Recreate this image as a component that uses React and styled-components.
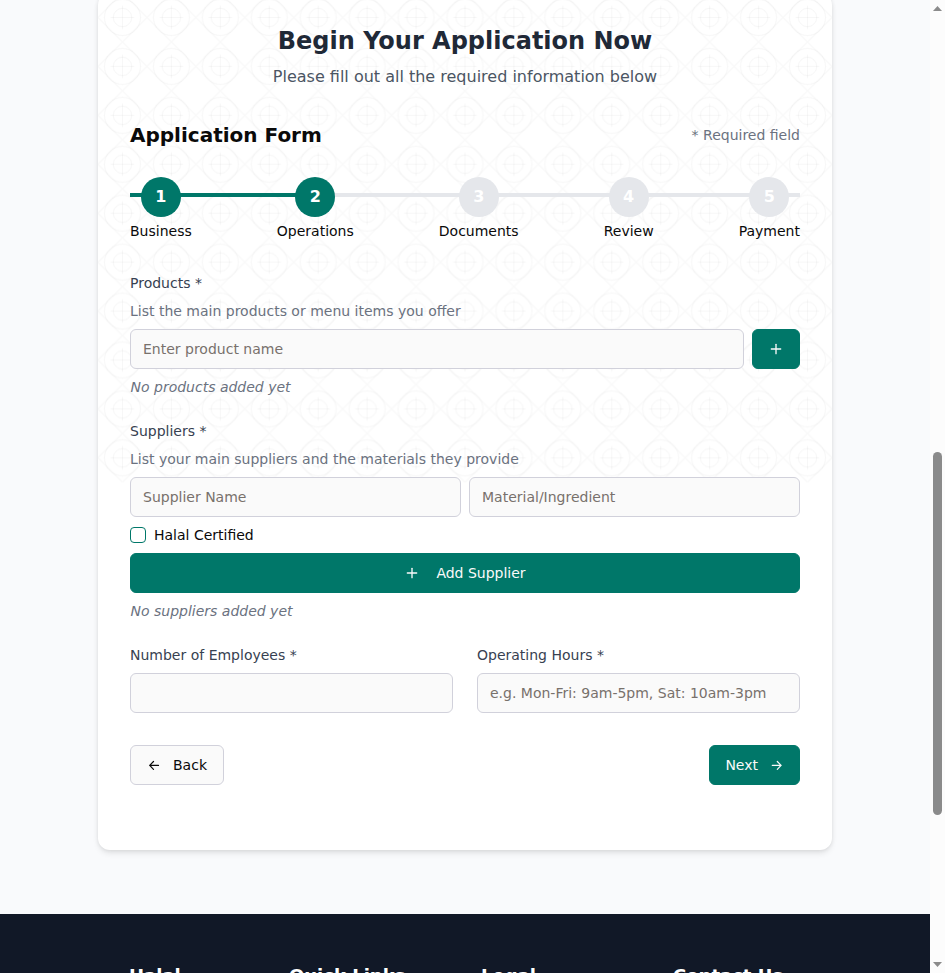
import React from "react";
import styled, { createGlobalStyle } from "styled-components";
import { Plus } from "lucide-react";

const GlobalStyle = createGlobalStyle`
  *, *::before, *::after { box-sizing: border-box; }
  html, body { margin: 0; padding: 0; overflow: hidden; }
  body { font-family: "DejaVu Sans", sans-serif; font-size: 14px; line-height: 20px; color: #0a0a0a; }
  h1, h2, h3, p { margin: 0; }
`;

const Window = styled.div`
  display: flex;
  width: 945px;
  height: 973px;
  overflow: hidden;
  background: #f9fafc;
`;

const Page = styled.div`
  flex: 1;
  display: flex;
  flex-direction: column;
  align-items: center;
  min-width: 0;
`;

const Card = styled.main`
  position: relative;
  flex: none;
  width: 734px;
  height: 857px;
  margin-top: -7px;
  padding: 32px;
  border-radius: 12px;
  background: #fff;
  box-shadow: 0 4px 6px -1px rgba(0, 0, 0, 0.1), 0 0 4px 0 rgba(0, 0, 0, 0.08);
`;

const Backdrop = styled.svg`
  position: absolute;
  top: 0;
  left: 0;
  border-radius: 12px 12px 0 0;
`;

const Content = styled.div`
  position: relative;
`;

const Title = styled.h1`
  font-size: 24px;
  line-height: 32px;
  font-weight: 700;
  text-align: center;
  color: #1f2937;
`;

const Subtitle = styled.p`
  margin-top: 8px;
  font-size: 16px;
  line-height: 24px;
  text-align: center;
  color: #4b5563;
`;

const FormHeader = styled.div`
  display: flex;
  align-items: center;
  justify-content: space-between;
  margin-top: 32px;
`;

const FormTitle = styled.h2`
  font-size: 20px;
  line-height: 28px;
  font-weight: 700;
`;

const Muted = styled.p`
  color: #6b7280;
  font-style: ${(p) => (p.$italic ? "italic" : "normal")};
  padding-left: ${(p) => (p.$italic ? "0.5px" : "0")};
`;

const Stepper = styled.div`
  position: relative;
  display: flex;
  justify-content: space-between;
  margin-top: 28px;
`;

const Track = styled.div`
  position: absolute;
  top: 16px;
  left: 0;
  width: ${(p) => p.$width};
  height: 4px;
  background: ${(p) => p.$color};
`;

const Step = styled.div`
  position: relative;
  display: flex;
  flex-direction: column;
  align-items: center;
  gap: 4px;
`;

const StepNumber = styled.div`
  display: flex;
  align-items: center;
  justify-content: center;
  width: 40px;
  height: 40px;
  border-radius: 50%;
  font-size: 16px;
  font-weight: 700;
  color: #fff;
  background: ${(p) => (p.$active ? "#007769" : "#e5e7eb")};
`;

const Fields = styled.div`
  display: flex;
  flex-direction: column;
  gap: 24px;
  margin-top: 32px;
`;

const Field = styled.div`
  display: flex;
  flex-direction: column;
  gap: 8px;
`;

const Label = styled.label`
  color: #374151;
`;

const Row = styled.div`
  display: flex;
  gap: ${(p) => p.$gap || 8}px;

  & > ${Field} { flex: 1; min-width: 0; }
`;

const Input = styled.input`
  flex: 1 1 0;
  width: 100%;
  min-width: 0;
  height: 40px;
  min-height: 40px;
  padding: 8px 12px;
  border: 1px solid #d1d1db;
  border-radius: 6px;
  background: #fafafa;
  font: inherit;
  color: #0a0a0a;

  &::placeholder { color: #78716c; opacity: 1; }
`;

const Button = styled.button`
  display: flex;
  align-items: center;
  justify-content: center;
  gap: ${(p) => p.$gap || 8}px;
  height: 40px;
  padding: 0 ${(p) => (p.$outline ? 16 : 15)}px;
  border: 1px solid ${(p) => (p.$outline ? "#d1d1db" : "#007769")};
  border-radius: 6px;
  background: ${(p) => (p.$outline ? "#fafafa" : "#007769")};
  color: ${(p) => (p.$outline ? "#0a0a0a" : "#fafafa")};
  font: inherit;
`;

const ArrowIcon = styled.svg`
  flex: none;
  fill: none;
  stroke: currentColor;
  stroke-width: 1.2;
  stroke-linecap: round;
  stroke-linejoin: round;
`;

const CheckRow = styled.label`
  display: flex;
  align-items: center;
  gap: 8px;
`;

const Checkbox = styled.span`
  width: 16px;
  height: 16px;
  border: 1px solid #007769;
  border-radius: 4px;
`;

const Actions = styled.div`
  display: flex;
  justify-content: space-between;
  margin-top: 32px;
`;

const Footer = styled.footer`
  flex: 1 0 auto;
  align-self: stretch;
  margin-top: 64px;
  padding: 48px 129px 0;
  background: #111827;
`;

const FooterGrid = styled.div`
  display: grid;
  grid-template-columns: 160px 192px 192px 128px;
`;

const FooterTitle = styled.h3`
  font-size: 18px;
  line-height: 28px;
  font-weight: 700;
  color: #fff;
`;

const Scrollbar = styled.div`
  display: flex;
  flex-direction: column;
  align-items: center;
  width: 15px;
  padding: 6px 0;
  background: #fcfcfc;
`;

const Arrow = styled.svg`
  display: block;
  flex: none;
  fill: #8b8b8b;
`;

const Thumb = styled.div`
  width: 9px;
  height: 363px;
  margin: 441px 0 auto;
  border-radius: 5px;
  background: #8b8b8b;
`;

const steps = ["Business", "Operations", "Documents", "Review", "Payment"];

const Ornament = () => (
  <Backdrop width="734" height="490" viewBox="0 0 734 490">
    <defs>
      <pattern id="tile" width="48.933" height="48.933" y="0" patternUnits="userSpaceOnUse">
        <g transform="scale(0.97866)" fill="none" stroke="#000">
          <path d="M25 0L50 25L25 50L0 25Z" strokeOpacity="0.022" strokeWidth="1.1" />
          <circle cx="25" cy="25" r="18.4" strokeOpacity="0.033" />
          <circle cx="25" cy="25" r="9.4" strokeOpacity="0.036" />
          <path d="M25 13V37M13 25H37" strokeOpacity="0.036" />
        </g>
      </pattern>
    </defs>
    <rect width="734" height="489.33" fill="url(#tile)" />
  </Backdrop>
);

export default function App() {
  return (
    <>
      <GlobalStyle />
      <Window>
        <Page>
          <Card>
            <Ornament />
            <Content>
              <Title>Begin Your Application Now</Title>
              <Subtitle>Please fill out all the required information below</Subtitle>
              <FormHeader>
                <FormTitle>Application Form</FormTitle>
                <Muted>* Required field</Muted>
              </FormHeader>
              <Stepper>
                <Track $width="100%" $color="#e5e7eb" />
                <Track $width="25%" $color="#007769" />
                {steps.map((name, i) => (
                  <Step key={name}>
                    <StepNumber $active={i < 2}>{i + 1}</StepNumber>
                    <span>{name}</span>
                  </Step>
                ))}
              </Stepper>
              <Fields>
                <Field>
                  <Label>Products *</Label>
                  <Muted>List the main products or menu items you offer</Muted>
                  <Row>
                    <Input placeholder="Enter product name" />
                    <Button aria-label="Add product"><Plus size={16} /></Button>
                  </Row>
                  <Muted $italic>No products added yet</Muted>
                </Field>
                <Field>
                  <Label>Suppliers *</Label>
                  <Muted>List your main suppliers and the materials they provide</Muted>
                  <Row>
                    <Input placeholder="Supplier Name" />
                    <Input placeholder="Material/Ingredient" />
                  </Row>
                  <CheckRow><Checkbox />Halal Certified</CheckRow>
                  <Button $gap={16}><Plus size={16} />Add Supplier</Button>
                  <Muted $italic>No suppliers added yet</Muted>
                </Field>
                <Row $gap={24}>
                  <Field>
                    <Label>Number of Employees *</Label>
                    <Input />
                  </Field>
                  <Field>
                    <Label>Operating Hours *</Label>
                    <Input placeholder="e.g. Mon-Fri: 9am-5pm, Sat: 10am-3pm" />
                  </Field>
                </Row>
              </Fields>
              <Actions>
                <Button $outline $gap={11}>
                  <ArrowIcon width="15" height="15" viewBox="0 0 15 15"><path d="M11.5 7.4H2.7M6.5 3.5L2.7 7.4L6.5 11.3" /></ArrowIcon>
                  Back
                </Button>
                <Button $gap={11}>
                  Next
                  <ArrowIcon width="15" height="15" viewBox="0 0 15 15"><path d="M3.3 7.4H12.1M8.3 3.5L12.1 7.4L8.3 11.3" /></ArrowIcon>
                </Button>
              </Actions>
            </Content>
          </Card>
          <Footer>
            <FooterGrid>
              <FooterTitle>Halal</FooterTitle>
              <FooterTitle>Quick Links</FooterTitle>
              <FooterTitle>Legal</FooterTitle>
              <FooterTitle>Contact Us</FooterTitle>
            </FooterGrid>
          </Footer>
        </Page>
        <Scrollbar>
          <Arrow width="9" height="5" viewBox="0 0 9 5"><path d="M0 5L4.5 0L9 5Z" /></Arrow>
          <Thumb />
          <Arrow width="9" height="5" viewBox="0 0 9 5"><path d="M0 0L4.5 5L9 0Z" /></Arrow>
        </Scrollbar>
      </Window>
    </>
  );
}
